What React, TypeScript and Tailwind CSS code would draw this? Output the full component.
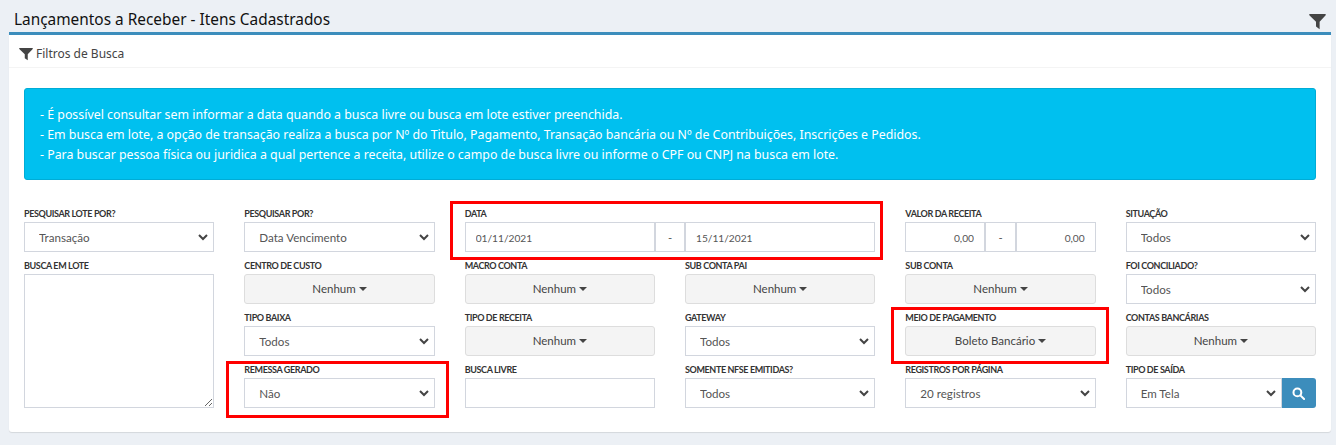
import type { ReactNode } from "react";

const font = "font-['Noto_Sans','Open_Sans',sans-serif]";
const controlFont = "font-['Lato','Noto_Sans',sans-serif]";

function Funnel({ className }: { className: string }) {
  return (
    <svg viewBox="0 0 16 16" className={className} fill="currentColor">
      <path d="M0.3 1h15.4v1.2L10 8.2V15.2L6.6 12.8V8.2L0.3 2.2z" />
    </svg>
  );
}

function Chevron() {
  return (
    <svg
      viewBox="0 0 10 7"
      className="absolute right-[6px] top-[12px] w-[10px] h-[7px] pointer-events-none text-[#444]"
      fill="none"
      stroke="currentColor"
      strokeWidth="2"
    >
      <path d="M1 1l4 4 4-4" />
    </svg>
  );
}

function Field({
  label,
  children,
  className = "",
}: {
  label: string;
  children: ReactNode;
  className?: string;
}) {
  return (
    <div className={`relative flex flex-col ${className}`}>
      <label className={`h-[22px] pt-[7px] text-[9px] tracking-[-0.38px] leading-[14px] font-bold text-[#333] whitespace-nowrap ${controlFont}`}>
        {label}
      </label>
      {children}
    </div>
  );
}

function SelectBox({ value }: { value: string }) {
  return (
    <div className="relative h-[30px] flex-1 min-w-0">
      <select className={`w-full h-full appearance-none bg-white border border-[#d2d6de] pl-[14px] pt-[1px] text-[11.6px] text-[#555] outline-none ${controlFont}`}>
        <option>{value}</option>
      </select>
      <Chevron />
    </div>
  );
}

function DropButton({ value }: { value: string }) {
  return (
    <button className={`h-[30px] w-full flex items-center justify-center gap-[3px] bg-[#f4f4f4] border border-[#ddd] rounded-[3px] text-[11.5px] text-[#444] ${controlFont}`}>
      {value}
      <span className="border-x-[4px] border-x-transparent border-t-[4px] border-t-[#444]" />
    </button>
  );
}

function TextInput({ value, className = "" }: { value: string; className?: string }) {
  return (
    <input
      readOnly
      value={value}
      className={`h-[30px] min-w-0 border border-[#d2d6de] bg-white px-[10px] pt-[1px] text-[10.2px] text-[#555] outline-none ${controlFont} ${className}`}
    />
  );
}

function Dash({ className }: { className: string }) {
  return (
    <span className={`h-[30px] flex items-center justify-center border border-[#d2d6de] bg-white text-[11.5px] text-[#555] ${className}`}>
      -
    </span>
  );
}

function RedBox({ className }: { className: string }) {
  return <div className={`absolute border-[3px] border-[#f00] pointer-events-none ${className}`} />;
}

export default function App() {
  return (
    <div className={`h-[445px] overflow-hidden bg-[#ecf0f5] pl-[9px] pr-[5px] ${font}`}>
      {/* Page title */}
      <div className="h-[32px] flex items-end justify-between pl-[5px] pr-[5px] pb-[2px]">
        <h1 className="text-[15.4px] leading-[21px] text-[#111]">Lançamentos a Receber - Itens Cadastrados</h1>
        <Funnel className="w-[17px] h-[17px] text-[#444]" />
      </div>

      <div className="bg-white border-t-[3px] border-[#3c8dbc] rounded-b-[3px] shadow-[0_1px_1px_rgba(0,0,0,0.1)] h-[400px]">
        {/* Box header */}
        <div className="h-[33px] flex items-center gap-[3px] pl-[10px] pt-[5px] border-b border-[#f4f4f4]">
          <Funnel className="w-[14px] h-[14px] text-[#444]" />
          <span className="text-[12px] text-[#444]">Filtros de Busca</span>
        </div>

        <div className="px-[15px] pt-[20px]">
          {/* Info alert */}
          <div className="h-[92px] flex flex-col justify-center pt-[1px] bg-[#00c0ef] border border-[#00acd6] rounded-[3px] px-[15px] text-[12.37px] leading-[20px] text-white">
            <p>- É possível consultar sem informar a data quando a busca livre ou busca em lote estiver preenchida.</p>
            <p>- Em busca em lote, a opção de transação realiza a busca por Nº do Titulo, Pagamento, Transação bancária ou Nº de Contribuições, Inscrições e Pedidos.</p>
            <p>- Para buscar pessoa física ou juridica a qual pertence a receita, utilize o campo de busca livre ou informe o CPF ou CNPJ na busca em lote.</p>
          </div>

          {/* Filters */}
          <div className="mt-[20px] grid grid-cols-6 gap-x-[30px] auto-rows-[52px]">
            <Field label="PESQUISAR LOTE POR?"><SelectBox value="Transação" /></Field>
            <Field label="PESQUISAR POR?"><SelectBox value="Data Vencimento" /></Field>
            <Field label="DATA" className="col-span-2">
              <div className="flex">
                <TextInput value="01/11/2021" className="flex-1" />
                <Dash className="w-[30px]" />
                <TextInput value="15/11/2021" className="flex-1" />
              </div>
              <RedBox className="-left-[15px] -right-[8px] top-[1px] h-[59px]" />
            </Field>
            <Field label="VALOR DA RECEITA">
              <div className="flex">
                <TextInput value="0,00" className="flex-1 w-0 text-right" />
                <Dash className="w-[31px]" />
                <TextInput value="0,00" className="flex-1 w-0 text-right" />
              </div>
            </Field>
            <Field label="SITUAÇÃO"><SelectBox value="Todos" /></Field>

            <Field label="BUSCA EM LOTE" className="row-span-3">
              <textarea readOnly className="h-[138px] w-full border border-[#d2d6de] bg-white outline-none" />
            </Field>
            <Field label="CENTRO DE CUSTO"><DropButton value="Nenhum" /></Field>
            <Field label="MACRO CONTA"><DropButton value="Nenhum" /></Field>
            <Field label="SUB CONTA PAI"><DropButton value="Nenhum" /></Field>
            <Field label="SUB CONTA"><DropButton value="Nenhum" /></Field>
            <Field label="FOI CONCILIADO?"><SelectBox value="Todos" /></Field>

            <Field label="TIPO BAIXA"><SelectBox value="Todos" /></Field>
            <Field label="TIPO DE RECEITA"><DropButton value="Nenhum" /></Field>
            <Field label="GATEWAY"><SelectBox value="Todos" /></Field>
            <Field label="MEIO DE PAGAMENTO">
              <DropButton value="Boleto Bancário" />
              <RedBox className="-left-[14px] -right-[13px] top-[3px] h-[57px]" />
            </Field>
            <Field label="CONTAS BANCÁRIAS"><DropButton value="Nenhum" /></Field>

            <Field label="REMESSA GERADO">
              <SelectBox value="Não" />
              <RedBox className="-left-[18px] -right-[14px] top-[5px] h-[57px]" />
            </Field>
            <Field label="BUSCA LIVRE"><TextInput value="" className="w-full" /></Field>
            <Field label="SOMENTE NFSE EMITIDAS?"><SelectBox value="Todos" /></Field>
            <Field label="REGISTROS POR PÁGINA"><SelectBox value="20 registros" /></Field>
            <Field label="TIPO DE SAÍDA">
              <div className="flex">
                <SelectBox value="Em Tela" />
                <button className="w-[34px] h-[30px] flex items-center justify-center bg-[#3c8dbc] rounded-r-[3px]">
                  <svg viewBox="0 0 14 14" className="w-[13px] h-[13px]" fill="none" stroke="white" strokeWidth="2.2">
                    <circle cx="5.8" cy="5.8" r="4.2" />
                    <path d="M9 9l4 4" strokeLinecap="round" />
                  </svg>
                </button>
              </div>
            </Field>
          </div>
        </div>
      </div>
    </div>
  );
}
